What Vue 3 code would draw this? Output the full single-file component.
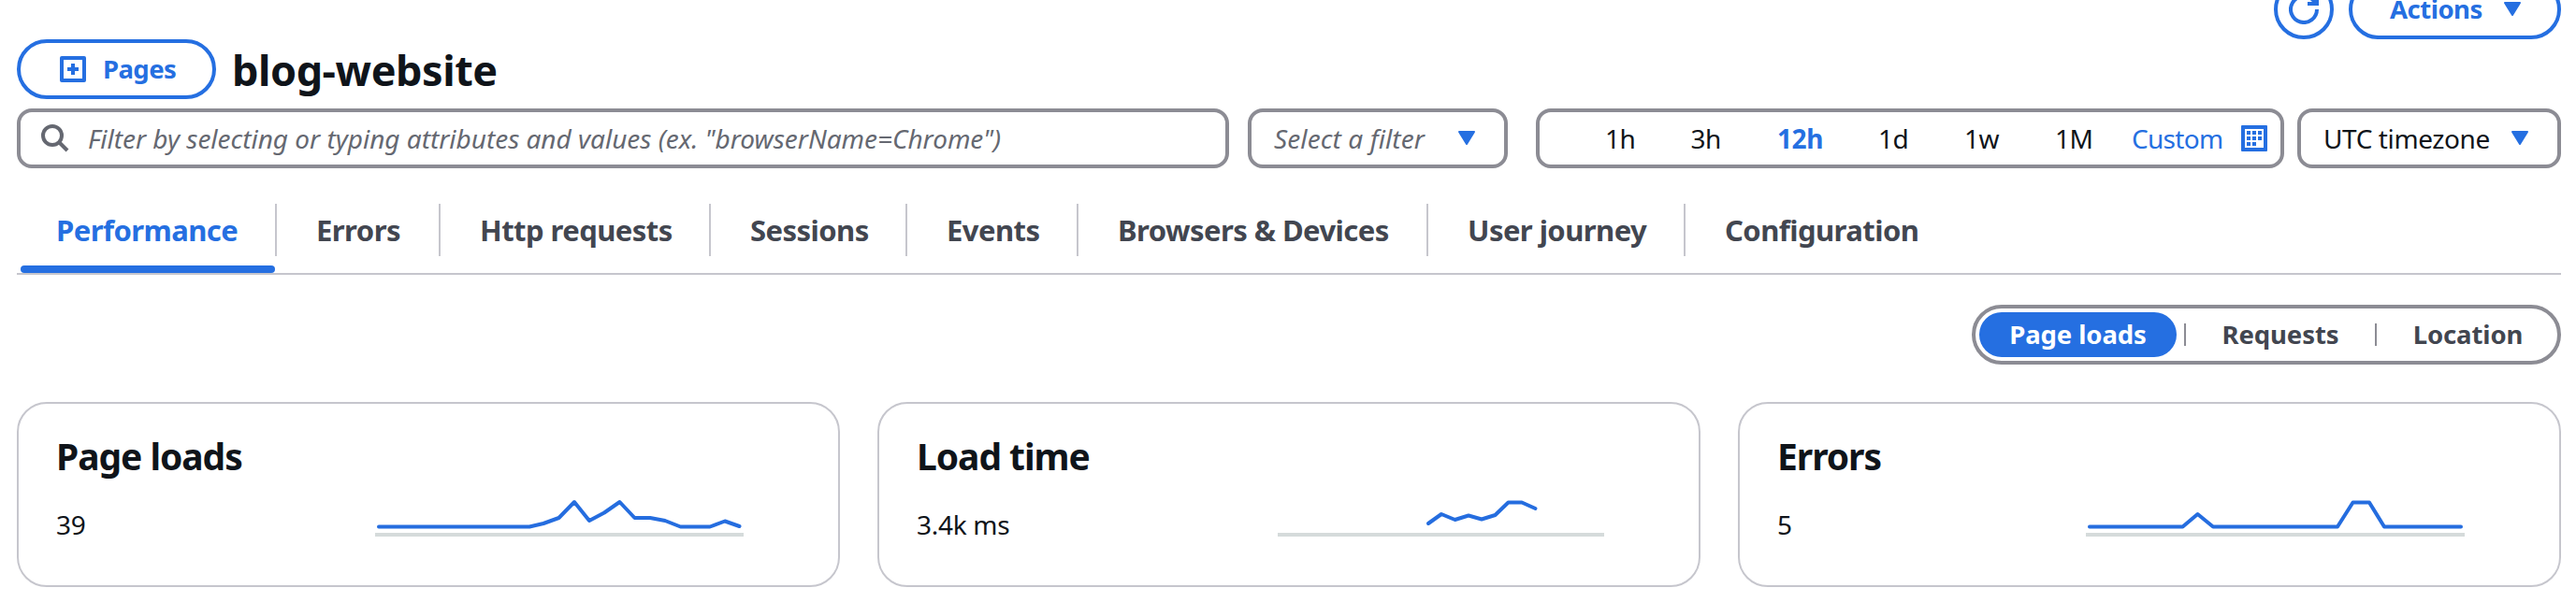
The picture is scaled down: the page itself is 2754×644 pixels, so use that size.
<script setup>
import { ref } from 'vue'

const ranges = ['1h', '3h', '12h', '1d', '1w', '1M']
const range = ref('12h')

const tabs = [
  'Performance', 'Errors', 'Http requests', 'Sessions', 'Events',
  'Browsers & Devices', 'User journey', 'Configuration',
]
const tab = ref('Performance')

const segments = ['Page loads', 'Requests', 'Location']
const segment = ref('Page loads')

// Sparkline points are relative to the left end of the grey axis.
const cards = [
  {
    title: 'Page loads',
    value: '39',
    width: 394,
    points: '4,29.5 165,29.5 180,26 196.5,20 213,3 229,23 245,14.5 261.5,3 277.5,20 294,20 310,23 326.5,29.5 358,29.5 374,23.5 389.5,29',
  },
  {
    title: 'Load time',
    value: '3.4k ms',
    width: 349,
    points: '161,26 175,16 189.5,22 204,17.5 218,21.5 232.5,17 246.5,3.5 261,3.5 275.5,10',
  },
  {
    title: 'Errors',
    value: '5',
    width: 405,
    points: '4,29.5 103.5,29.5 119.5,16 136,29.5 269,29.5 285.5,3.5 303,3.5 319,29.5 401,29.5',
  },
]
</script>

<template>
  <main class="page">
    <div class="actions">
      <button class="pill round" aria-label="Refresh">
        <svg width="32" height="32" viewBox="0 0 32 32" fill="none" stroke="currentColor" stroke-width="4">
          <path d="M30 16A14 14 0 1 1 26 6.2L30 10" />
          <path d="M30 0V10H20" />
        </svg>
      </button>
      <button class="pill act">
        <span>Actions</span>
        <svg class="caret" viewBox="0 0 20 16"><path d="M2 1H18L10 14Z" /></svg>
      </button>
    </div>

    <header class="heading">
      <button class="pill pages">
        <svg width="28" height="28" viewBox="0 0 28 28" fill="none" stroke="currentColor" stroke-width="4" stroke-linejoin="round">
          <path d="M2 2H26V26H2ZM14 8V20M8 14H20" />
        </svg>
        <span>Pages</span>
      </button>
      <h1>blog-website</h1>
    </header>

    <div class="filters">
      <div class="field search">
        <svg width="30" height="30" viewBox="0 0 30 30" fill="none" stroke="#656871" stroke-width="4">
          <circle cx="12" cy="12" r="10" />
          <path d="M19 19L28 28" />
        </svg>
        <em>Filter by selecting or typing attributes and values (ex. "browserName=Chrome")</em>
      </div>
      <div class="field select">
        <em>Select a filter</em>
        <svg class="caret" viewBox="0 0 20 16"><path d="M2 1H18L10 14Z" /></svg>
      </div>
      <div class="field times">
        <div class="ranges">
          <span v-for="r in ranges" :key="r" class="range" :class="{ on: r === range }">{{ r }}</span>
        </div>
        <span class="custom">Custom</span>
        <svg class="calendar" width="28" height="28" viewBox="0 0 28 28">
          <path fill="currentColor" fill-rule="evenodd" d="M1 0H27Q28 0 28 1V27Q28 28 27 28H1Q0 28 0 27V1Q0 0 1 0ZM4 4V24H24V4Z" />
          <path fill="currentColor" d="M6 6h4v4h-4zM12 6h4v4h-4zM18 6h4v4h-4zM6 12h4v4h-4zM12 12h4v4h-4zM18 12h4v4h-4zM6 18h4v4h-4zM12 18h4v4h-4z" />
        </svg>
      </div>
      <div class="field zone">
        <span>UTC timezone</span>
        <svg class="caret" viewBox="0 0 20 16"><path d="M2 1H18L10 14Z" /></svg>
      </div>
    </div>

    <nav class="tabs">
      <a v-for="t in tabs" :key="t" class="tab" :class="{ on: t === tab }"><span>{{ t }}</span></a>
    </nav>

    <div class="switch">
      <div class="segments">
        <template v-for="(s, i) in segments" :key="s">
          <i v-if="i" class="bar"></i>
          <span class="segment" :class="{ on: s === segment }">{{ s }}</span>
        </template>
      </div>
    </div>

    <section class="cards">
      <article v-for="c in cards" :key="c.title" class="card">
        <h2>{{ c.title }}</h2>
        <div class="metric">
          <span>{{ c.value }}</span>
          <svg :width="c.width" height="40" :viewBox="`0 0 ${c.width} 40`" fill="none">
            <path :d="`M0 38H${c.width}`" stroke="#d5dbdb" stroke-width="4" />
            <polyline :points="c.points" stroke="#256ddf" stroke-width="4" stroke-linejoin="round" stroke-linecap="round" />
          </svg>
        </div>
      </article>
    </section>
  </main>
</template>

<style>
body {
  margin: 0;
  background: #fff;
}
</style>

<style scoped>
* {
  box-sizing: border-box;
}
.page {
  width: 2754px;
  height: 644px;
  padding: 0 16px 0 18px;
  overflow: hidden;
  color: #0f141a;
  font: 400 28px/40px "Noto Sans", "Open Sans", sans-serif;
  white-space: nowrap;
}
svg {
  display: block;
  flex: none;
}
.actions {
  display: flex;
  justify-content: flex-end;
  gap: 16px;
  height: 42px;
  align-items: flex-end;
}
.pill {
  display: flex;
  align-items: center;
  flex: none;
  height: 64px;
  margin: 0;
  padding: 0;
  border: 4px solid #256fe1;
  border-radius: 32px;
  background: #fff;
  color: #256fe1;
  font: inherit;
  font-size: 27.5px;
  font-weight: 700;
}
.round {
  width: 64px;
  justify-content: center;
}
.act {
  width: 227px;
  padding: 0 38px 0 40px;
  justify-content: space-between;
  letter-spacing: -0.5px;
}
.caret {
  width: 20px;
  height: 16px;
  fill: #256fe1;
  stroke: #256fe1;
  stroke-width: 2;
  stroke-linejoin: round;
}
.heading {
  display: flex;
  align-items: center;
  gap: 17px;
  height: 64px;
}
.pages {
  width: 213px;
  padding-left: 42px;
  gap: 18px;
  letter-spacing: -0.6px;
}
h1 {
  margin: 2px 0 0;
  font-size: 45px;
  line-height: 60px;
  font-weight: 700;
  letter-spacing: -0.45px;
}
.filters {
  display: flex;
  margin-top: 10px;
  height: 64px;
}
.field {
  display: flex;
  align-items: center;
  flex: none;
  border: 4px solid #8c8c94;
  border-radius: 16px;
  letter-spacing: -0.4px;
}
.field em {
  color: #656871;
  letter-spacing: -0.02px;
}
.search {
  width: 1296px;
  padding-left: 22px;
  gap: 20px;
}
.select {
  width: 278px;
  margin-left: 20px;
  padding: 0 30px 0 24px;
  justify-content: space-between;
}
.select em {
  letter-spacing: 0.1px;
}
.times {
  width: 800px;
  margin-left: 30px;
  padding: 0 14px 0 70px;
}
.ranges {
  display: grid;
  grid-template-columns: 91.5px 92.5px 108px 92px 97px 82px;
}
.range.on {
  color: #256fe1;
  font-weight: 700;
}
.custom {
  color: #256fe1;
  letter-spacing: -0.7px;
}
.calendar {
  margin-left: auto;
  color: #256fe1;
}
.zone {
  width: 282px;
  margin-left: 14px;
  padding: 0 30px 0 24px;
  justify-content: space-between;
}
.tabs {
  display: grid;
  grid-template-columns: 278px 175px 289px 210px 183px 374px 275px 290px;
  height: 76px;
  margin-top: 38px;
  border-bottom: 2px solid #c6c6cd;
  color: #424650;
  font-size: 31px;
  font-weight: 700;
  letter-spacing: -0.55px;
}
.tab {
  position: relative;
  height: 56px;
  padding-left: 42px;
  border-right: 2px solid #c6c6cd;
  line-height: 56px;
}
.tab:last-child {
  border: 0;
}
.tab.on {
  color: #256fe1;
}
.tab.on::after {
  content: "";
  position: absolute;
  left: 4px;
  right: 0;
  bottom: -18px;
  height: 8px;
  border-radius: 4px;
  background: #256fe1;
}
.switch {
  display: flex;
  justify-content: flex-end;
  margin-top: 32px;
}
.segments {
  display: flex;
  align-items: center;
  width: 630px;
  height: 64px;
  padding-left: 4px;
  border: 4px solid #8c8c94;
  border-radius: 32px;
  color: #424650;
  font-size: 27.5px;
  font-weight: 700;
  letter-spacing: -0.1px;
}
.segment {
  flex: none;
  width: 202px;
  text-align: center;
}
.segment.on {
  width: 211px;
  height: 48px;
  border-radius: 24px;
  background: #256fe1;
  color: #fff;
  line-height: 48px;
}
.segment:last-child {
  width: 195px;
}
.bar {
  flex: none;
  width: 2px;
  height: 24px;
  background: #8c8c94;
}
.segment.on + .bar {
  margin-left: 8px;
}
.cards {
  display: grid;
  grid-template-columns: repeat(3, 880px);
  gap: 40px;
  margin-top: 40px;
}
.card {
  height: 198px;
  padding: 30px 101px 0 40px;
  border: 2px solid #c6c6cd;
  border-radius: 32px;
}
h2 {
  margin: 0;
  font-size: 39px;
  line-height: 51px;
  font-weight: 700;
  letter-spacing: -1.05px;
}
.metric {
  display: flex;
  justify-content: space-between;
  height: 40px;
  margin-top: 21px;
}
.metric span {
  padding-top: 7px;
  letter-spacing: -0.3px;
}
</style>
